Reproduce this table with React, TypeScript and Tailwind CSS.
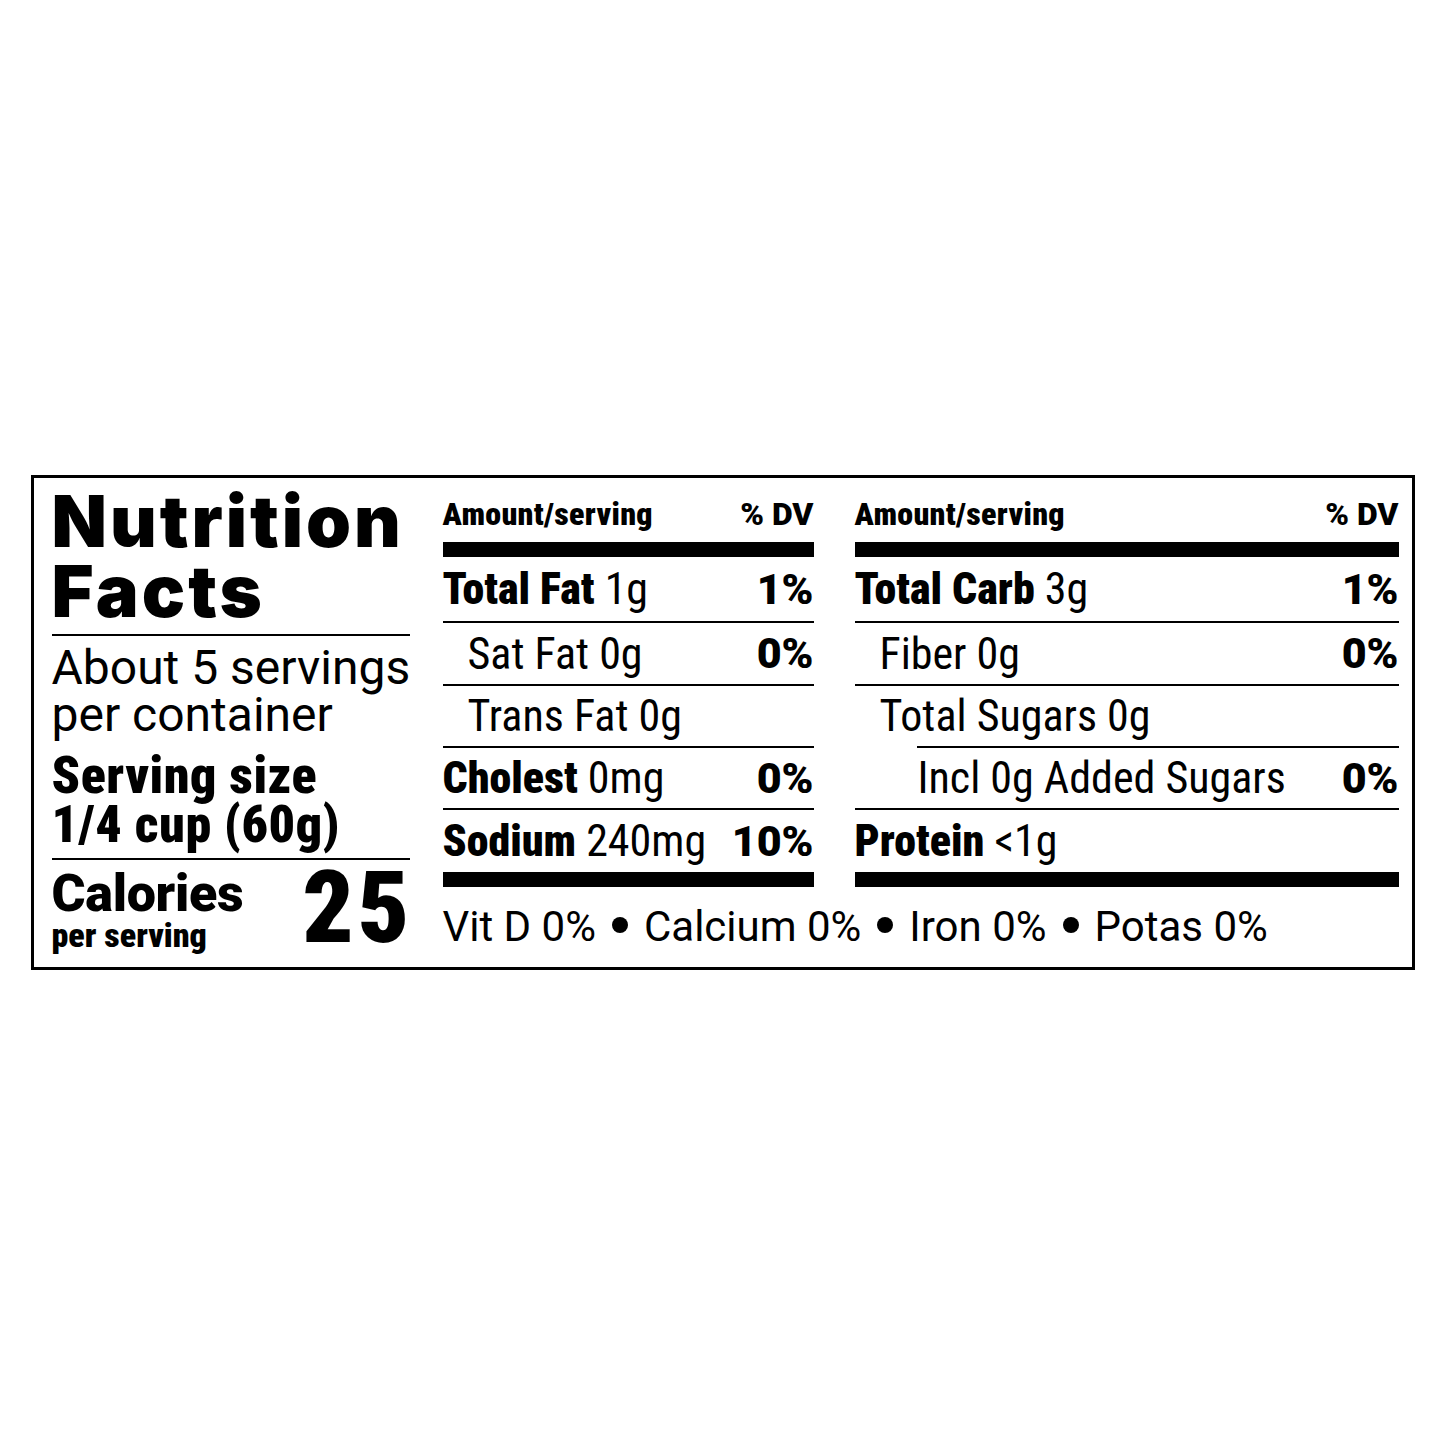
const rob = "font-['Roboto',sans-serif]";
const cond = `${rob} font-stretch-condensed`;

interface Row {
  label: string;
  amount: string;
  dv?: string;
  bold?: boolean;
  indent?: 'sm' | 'lg';
  lineIndent?: boolean;
}

const rowHeights = ['h-[64px]', 'h-[61px]', 'h-[60px]', 'h-[60px]', 'h-[62px]'];

const leftRows: Row[] = [
  { label: 'Total Fat', amount: '1g', dv: '1%', bold: true },
  { label: 'Sat Fat', amount: '0g', dv: '0%', indent: 'sm' },
  { label: 'Trans Fat', amount: '0g', indent: 'sm' },
  { label: 'Cholest', amount: '0mg', dv: '0%', bold: true },
  { label: 'Sodium', amount: '240mg', dv: '10%', bold: true },
];

const rightRows: Row[] = [
  { label: 'Total Carb', amount: '3g', dv: '1%', bold: true },
  { label: 'Fiber', amount: '0g', dv: '0%', indent: 'sm' },
  { label: 'Total Sugars', amount: '0g', indent: 'sm', lineIndent: true },
  { label: 'Incl 0g Added Sugars', amount: '', dv: '0%', indent: 'lg' },
  { label: 'Protein', amount: '<1g', bold: true },
];

function NutrientColumn({ rows, width }: { rows: Row[]; width: string }) {
  return (
    <div className={`flex flex-col ${width}`}>
      <div className="flex justify-between items-center h-[31px] mt-[20px] mb-[13px] text-[32px] leading-none font-black">
        <span className={`${cond} tracking-[0.3px]`}>Amount/serving</span>
        <span className={rob}>% DV</span>
      </div>
      <div className="h-[15px] bg-black" />
      {rows.map((row, i) => {
        const last = i === rows.length - 1;
        return (
          <div key={row.label} className="flex flex-col">
            <div
              className={`flex justify-between items-center ${rowHeights[i]} text-[44px] leading-none ${
                row.indent === 'sm' ? 'pl-[25px]' : row.indent === 'lg' ? 'pl-[63px]' : ''
              }`}
            >
              <span className={`${cond} whitespace-nowrap`}>
                {row.bold ? (
                  <>
                    <span className="font-black">{row.label}</span> {row.amount}
                  </>
                ) : (
                  <>
                    {row.label}
                    {row.amount && ` ${row.amount}`}
                  </>
                )}
              </span>
              {row.dv && <span className={`${rob} font-black text-[43px]`}>{row.dv}</span>}
            </div>
            {last ? (
              <div className="h-[15px] bg-black" />
            ) : (
              <div className={`h-[2px] bg-black ${row.lineIndent ? 'ml-[62px]' : ''}`} />
            )}
          </div>
        );
      })}
    </div>
  );
}

function Dot() {
  return <span className="inline-block w-[16px] h-[16px] rounded-full bg-black mx-[16px] mb-[4px]" />;
}

export default function App() {
  return (
    <div className="w-full h-[1445px] bg-white flex items-center justify-center text-black">
      <div className="w-[1384px] h-[495px] border-[3px] border-black flex pl-[18px] pr-[13px]">
        <div className="w-[358px] flex flex-col shrink-0">
          <div className='mt-[8px] text-[72px] leading-[70px] font-black tracking-[3px] font-["Inter",sans-serif]'>
            Nutrition
            <br />
            Facts
          </div>
          <div className="h-[2px] bg-black mt-[8px]" />
          <div className={`mt-[8px] text-[48px] leading-[47px] whitespace-nowrap ${rob}`}>
            About 5 servings
            <br />
            per container
          </div>
          <div className={`mt-[13px] text-[52px] leading-[49px] font-black tracking-[0.5px] whitespace-nowrap ${cond}`}>
            Serving size
            <br />
            1/4 cup (60g)
          </div>
          <div className="h-[2px] bg-black mt-[9px]" />
          <div className="flex justify-between items-start">
            <div className={`flex flex-col mt-[9px] font-black ${rob}`}>
              <span className="text-[52px] leading-[50px] tracking-[-0.3px]">Calories</span>
              <span className={`text-[34px] leading-[32px] ${cond}`}>per serving</span>
            </div>
            <span className={`mt-[8px] mr-[-4px] text-[101px] leading-[80px] font-black tracking-[4px] ${cond}`}>25</span>
          </div>
        </div>
        <div className="flex flex-col ml-[33px] flex-1">
          <div className="flex gap-[41px]">
            <NutrientColumn rows={leftRows} width="w-[371px]" />
            <NutrientColumn rows={rightRows} width="flex-1" />
          </div>
          <div className={`mt-[19px] text-[42px] leading-none flex items-center whitespace-nowrap ${rob}`}>
            <span>Vit D 0%</span>
            <Dot />
            <span>Calcium 0%</span>
            <Dot />
            <span>Iron 0%</span>
            <Dot />
            <span>Potas 0%</span>
          </div>
        </div>
      </div>
    </div>
  );
}
